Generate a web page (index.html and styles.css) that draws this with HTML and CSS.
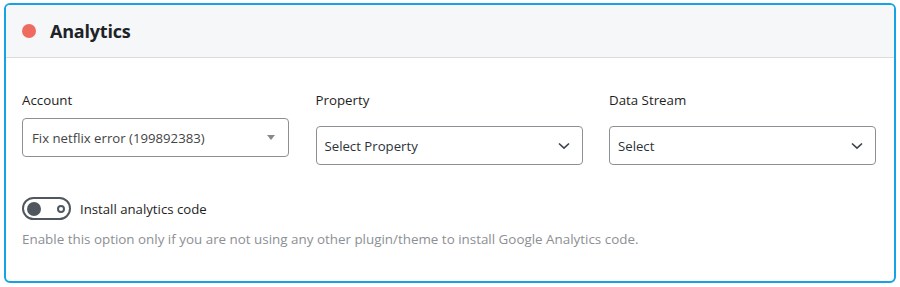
FILE: index.html
```html
<!DOCTYPE html>
<html>
<head>
<meta charset="utf-8">
<link rel="stylesheet" href="styles.css">
</head>
<body>
<div class="card">
  <div class="card-head">
    <span class="dot"></span>
    <h2 class="title">Analytics</h2>
  </div>
  <div class="card-body">
    <div class="fields">
      <div class="field">
        <label class="label">Account</label>
        <div class="select select-account">
          <span class="select-text">Fix netflix error (199892383)</span>
          <span class="tri"></span>
        </div>
      </div>
      <div class="field field-low">
        <label class="label">Property</label>
        <div class="select">
          <span class="select-text">Select Property</span>
          <svg class="chev" width="12" height="8" viewBox="0 0 12 8"><path d="M1 1.5 L6 6.2 L11 1.5" fill="none" stroke="#3c434a" stroke-width="1.6"/></svg>
        </div>
      </div>
      <div class="field field-low">
        <label class="label">Data Stream</label>
        <div class="select">
          <span class="select-text">Select</span>
          <svg class="chev" width="12" height="8" viewBox="0 0 12 8"><path d="M1 1.5 L6 6.2 L11 1.5" fill="none" stroke="#3c434a" stroke-width="1.6"/></svg>
        </div>
      </div>
    </div>
    <div class="toggle-row">
      <span class="toggle"><span class="knob"></span><span class="ring"></span></span>
      <span class="toggle-label">Install analytics code</span>
    </div>
    <p class="help">Enable this option only if you are not using any other plugin/theme to install Google Analytics code.</p>
  </div>
</div>
</body>
</html>
```
FILE: styles.css
```css
* { box-sizing: border-box; }
body {
  margin: 0;
  padding: 3px 4px 0 4px;
  font-family: "Open Sans", "Noto Sans", sans-serif;
  background: #ffffff;
  color: #1e1e1e;
}
.card {
  width: 892px;
  height: 280px;
  border: 2px solid #16a3e6;
  border-radius: 6px;
  overflow: hidden;
  background: #fff;
}
.card-head {
  height: 53px;
  background: #f6f7f9;
  border-bottom: 1px solid #dcdcde;
  display: flex;
  align-items: center;
  padding-left: 16px;
}
.dot {
  width: 14px;
  height: 14px;
  border-radius: 50%;
  background: #ef6a5f;
  margin-right: 14px;
}
.title {
  margin: 0;
  font-size: 18px;
  font-weight: 700;
  color: #1d2327;
  letter-spacing: -0.2px;
}
.card-body {
  padding: 32px 18px 0 16px;
}
.fields {
  display: grid;
  grid-template-columns: 267px 267px 267px;
  column-gap: 26.5px;
}
.field { display: flex; flex-direction: column; }
.label {
  font-size: 13.3px;
  line-height: 20px;
  color: #1e1e1e;
  margin-bottom: 8px;
}
.field-low .label { margin-bottom: 16px; }
.select {
  height: 39px;
  border: 1px solid #8c8f94;
  border-radius: 4px;
  display: flex;
  align-items: center;
  justify-content: space-between;
  padding: 0 12px 0 8px;
  font-size: 13.2px;
  color: #2c3338;
}
.select-account { padding: 0 12px 0 9px; color: #444; }
.tri {
  width: 0; height: 0;
  border-left: 4px solid transparent;
  border-right: 4px solid transparent;
  border-top: 5px solid #888;
  margin-right: 1px;
}
.chev { display: block; }
.toggle-row {
  display: flex;
  align-items: center;
  margin-top: 32px;
}
.toggle {
  width: 49px;
  height: 23px;
  border: 2px solid #50575e;
  border-radius: 12px;
  display: flex;
  align-items: center;
  justify-content: space-between;
  padding: 0 4px 0 3px;
}
.knob {
  width: 14px; height: 14px;
  border-radius: 50%;
  background: #50575e;
}
.ring {
  width: 8px; height: 8px;
  border-radius: 50%;
  border: 2px solid #50575e;
}
.toggle-label {
  margin-left: 9px;
  font-size: 13.2px;
  color: #1e1e1e;
}
.help {
  margin: 10px 0 0 0;
  font-size: 13.4px;
  color: #8c8f94;
}
```
